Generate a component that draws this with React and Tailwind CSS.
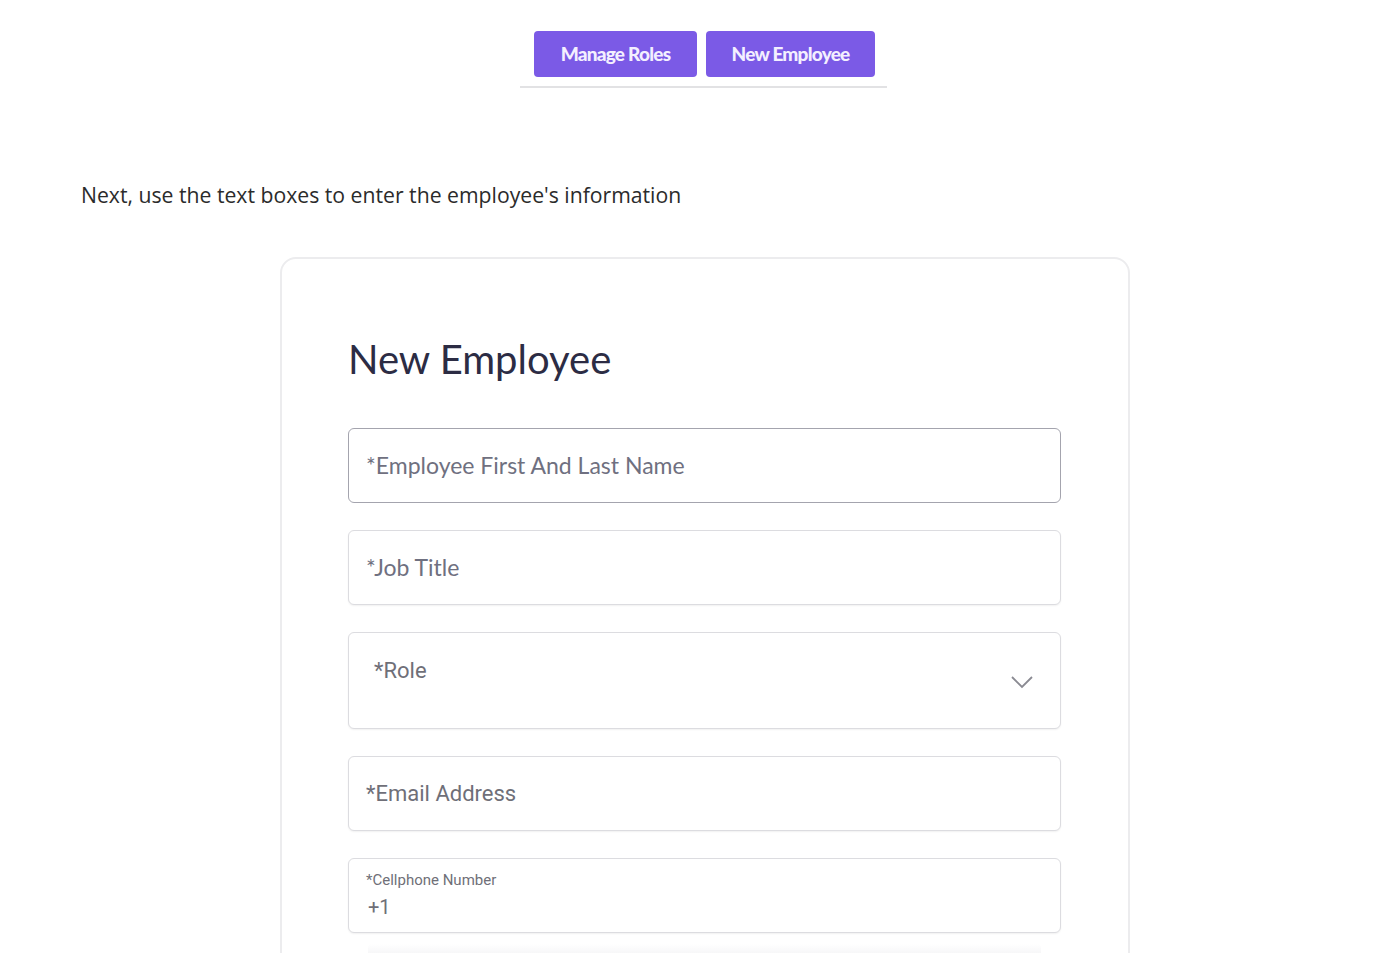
function Field({ label, focused }) {
  return (
    <div
      className={`flex h-[75px] items-center rounded-md border bg-white px-[17px] ${
        focused ? "border-[#a4a4ae]" : "border-[#dcdce0] shadow-[0_1px_2px_rgba(0,0,0,0.06)]"
      }`}
    >
      <span className="text-[23px] text-[#6f7080]" style={{ fontFamily: "Lato, sans-serif" }}>
        {label}
      </span>
    </div>
  );
}

export default function App() {
  return (
    <div className="h-[953px] overflow-hidden bg-white" style={{ fontFamily: "Lato, sans-serif" }}>
      {/* top actions */}
      <div className="ml-[520px] w-[367px] pt-[31px]">
        <div className="flex gap-[9px] pl-[14px]">
          <button className="h-[46px] w-[163px] rounded bg-[#7b5ae6] text-[19px] font-black tracking-[-0.04em] text-[#f3efff]">
            Manage Roles
          </button>
          <button className="h-[46px] w-[169px] rounded bg-[#7b5ae6] text-[19px] font-black tracking-[-0.04em] text-[#f3efff]">
            New Employee
          </button>
        </div>
        <div className="mt-[9px] h-[2px] bg-[#e2e2e4]" />
      </div>

      <p className="ml-[81px] mt-[92px] text-[21.2px] leading-[30px] text-[#2b2b2b]" style={{ fontFamily: "'Open Sans', sans-serif" }}>
        Next, use the text boxes to enter the employee's information
      </p>

      {/* form card */}
      <div className="ml-[280px] mt-[47px] h-[800px] w-[850px] rounded-2xl border-2 border-[#ececee] px-[66px] pt-[76px]">
        <h1 className="text-[40px] leading-[48px] text-[#2c2c44]">New Employee</h1>

        <div className="mt-[45px] flex w-[713px] flex-col gap-[27px]">
          <Field label="*Employee First And Last Name" focused />
          <Field label="*Job Title" />

          <div className="flex h-[97px] justify-between rounded-md border border-[#dcdce0] bg-white pl-[25px] pr-[27px] shadow-[0_1px_2px_rgba(0,0,0,0.06)]">
            <span className="pt-[21px] text-[22px] text-[#6f6f78]" style={{ fontFamily: "Roboto, sans-serif" }}>
              *Role
            </span>
            <svg className="mt-[43px]" width="22" height="13" viewBox="0 0 22 13" fill="none">
              <polyline points="1,1 11,11 21,1" stroke="#8a8a92" strokeWidth="1.8" />
            </svg>
          </div>

          <div className="flex h-[75px] items-center rounded-md border border-[#dcdce0] bg-white px-[17px] shadow-[0_1px_2px_rgba(0,0,0,0.06)]">
            <span className="text-[22px] text-[#6f6f78]" style={{ fontFamily: "Roboto, sans-serif" }}>
              *Email Address
            </span>
          </div>

          <div className="flex h-[75px] flex-col rounded-md border border-[#dcdce0] bg-white px-[17px] pt-[11px] shadow-[0_1px_2px_rgba(0,0,0,0.06)]" style={{ fontFamily: "Roboto, sans-serif" }}>
            <span className="text-[15px] leading-[20px] text-[#6f6f78]">*Cellphone Number</span>
            <span className="mt-[4px] pl-[2px] text-[20px] leading-[26px] text-[#6f6f78]">+1</span>
          </div>

          <div className="mx-[20px] -mt-[16px] h-[12px] rounded bg-gradient-to-b from-white to-[#f4f4f6]" />
        </div>
      </div>
    </div>
  );
}
